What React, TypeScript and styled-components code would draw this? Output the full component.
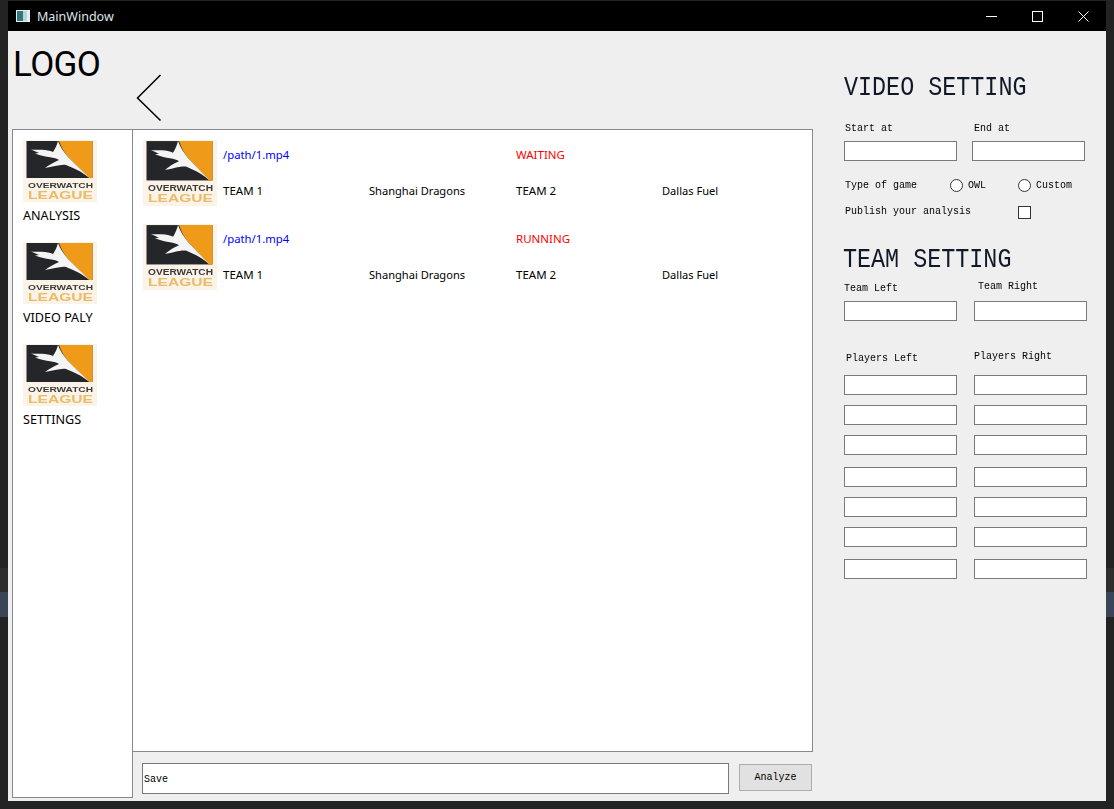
import React from "react";
import styled, { createGlobalStyle } from "styled-components";

const Global = createGlobalStyle`
  html, body { margin: 0; padding: 0; }
  body {
    height: 809px;
    overflow: hidden;
    background: linear-gradient(to bottom, #232323 0 568px, #2d2d2d 568px 592px, #3a4558 592px 617px, #232323 617px);
    font-family: "Noto Sans", sans-serif;
  }
`;

const mono = `"Liberation Mono", monospace`;

const Window = styled.div`
  width: 1098px;
  height: 800px;
  margin: 1px 0 0 8px;
  background: #efefef;
  display: flex;
  flex-direction: column;
`;

const TitleBar = styled.header`
  height: 30px;
  flex: none;
  background: #000;
  color: #dfe6ea;
  display: flex;
  align-items: center;
  padding-left: 8px;
  font-size: 12.5px;
`;

const TitleIcon = styled.svg`
  width: 14px;
  height: 12px;
  margin-right: 7px;
`;

const TitleText = styled.span`
  flex: 1;
`;

const WinButton = styled.div`
  width: 46px;
  height: 30px;
  display: flex;
  align-items: center;
  justify-content: center;
`;

const WinGlyph = styled.svg`
  width: 11px;
  height: 11px;
  stroke: #fff;
  fill: none;
`;

const Body = styled.div`
  flex: 1;
  display: flex;
  min-height: 0;
`;

const LeftColumn = styled.div`
  width: 805px;
  flex: none;
  display: flex;
  flex-direction: column;
`;

const Header = styled.div`
  height: 98px;
  flex: none;
  display: flex;
  padding-left: 5px;
`;

const LogoText = styled.div`
  width: 123px;
  flex: none;
  margin-top: 13px;
  font-family: Roboto, sans-serif;
  font-size: 35px;
  letter-spacing: -0.6px;
  line-height: 42px;
  color: #000;
`;

const BackArrow = styled.svg`
  width: 26px;
  height: 48px;
  margin-top: 43px;
`;

const Panels = styled.div`
  flex: 1;
  display: flex;
  padding-left: 4px;
`;

const Sidebar = styled.nav`
  width: 121px;
  height: 669px;
  flex: none;
  box-sizing: border-box;
  background: #fff;
  border: 1px solid #868a8e;
  padding: 10px 0 0 10px;
  display: flex;
  flex-direction: column;
  gap: 18px;
`;

const SideItem = styled.div`
  display: flex;
  flex-direction: column;
  gap: 6px;
`;

const SideLabel = styled.div`
  font-size: 12.6px;
  line-height: 16px;
  color: #000;
`;

const MainColumn = styled.div`
  flex: 1;
  display: flex;
  flex-direction: column;
  margin-left: -1px;
`;

const JobList = styled.section`
  height: 623px;
  flex: none;
  box-sizing: border-box;
  background: #fff;
  border: 1px solid #868a8e;
  padding: 10px 0 0 10px;
  display: flex;
  flex-direction: column;
  gap: 12px;
`;

const JobRow = styled.div`
  display: grid;
  grid-template-columns: 80px 146px 147px 146px 1fr;
  grid-template-rows: 30px 42px;
  align-items: center;
`;

const JobCell = styled.div<{ $color?: string; $size?: number }>`
  font-size: ${(p) => p.$size ?? 11.5}px;
  line-height: 16px;
  color: ${(p) => p.$color ?? "#000"};
  white-space: nowrap;
`;

const LogoSvg = styled.svg<{ $h: number; $span?: boolean }>`
  display: block;
  width: 74px;
  height: ${(p) => p.$h}px;
  filter: blur(0.45px);
  ${(p) => (p.$span ? "grid-row: 1 / 3; align-self: start;" : "")}
`;

const Footer = styled.div`
  display: flex;
  align-items: flex-start;
  gap: 10px;
  padding: 11px 0 0 10px;
`;

const SaveInput = styled.input`
  width: 587px;
  height: 31px;
  box-sizing: border-box;
  border: 1px solid #7a7a7a;
  background: #fff;
  padding: 2px 0 0 1px;
  margin: 0;
  outline: none;
  font-family: ${mono};
  font-size: 10px;
  color: #000;
`;

const AnalyzeButton = styled.button`
  width: 73px;
  height: 27px;
  margin: 1px 0 0;
  padding: 0;
  box-sizing: border-box;
  border: 1px solid #adadad;
  background: #e1e1e1;
  font-family: ${mono};
  font-size: 10px;
  color: #000;
`;

const Settings = styled.aside`
  flex: 1;
  padding-left: 31px;
  display: flex;
  flex-direction: column;
`;

const Heading = styled.h2<{ $top: number; $x?: number }>`
  margin: ${(p) => p.$top}px 0 0 ${(p) => p.$x ?? 0}px;
  font-family: ${mono};
  font-weight: 400;
  font-size: 23.4px;
  line-height: 30px;
  color: #10182a;
  white-space: nowrap;
  transform: scaleY(1.2);
`;

const TwoCols = styled.div<{ $top: number; $second?: number }>`
  margin-top: ${(p) => p.$top}px;
  display: grid;
  grid-template-columns: ${(p) => p.$second ?? 130}px 113px;
`;

const Label = styled.label<{ $x?: number; $dy?: number }>`
  display: block;
  padding-left: ${(p) => p.$x ?? 0}px;
  margin-top: ${(p) => p.$dy ?? 0}px;
  font-family: ${mono};
  font-size: 10px;
  line-height: 14px;
  color: #000;
  white-space: nowrap;
  transform: scaleY(1.15);
`;

const Field = styled.input`
  display: block;
  width: 113px;
  height: 20px;
  box-sizing: border-box;
  margin: 0;
  border: 1px solid #7a7a7a;
  background: #fff;
  outline: none;
`;

const OptionRow = styled.div<{ $top: number }>`
  margin-top: ${(p) => p.$top}px;
  height: 16px;
  display: flex;
  align-items: center;
  font-family: ${mono};
  font-size: 10px;
  color: #000;
`;

const OptionTitle = styled.span<{ $w: number }>`
  width: ${(p) => p.$w}px;
  padding-left: 1px;
  box-sizing: border-box;
  flex: none;
  white-space: nowrap;
  transform: scaleY(1.15);
`;

const Option = styled.label`
  width: 68px;
  flex: none;
  display: flex;
  align-items: center;
  gap: 5px;
`;

const OptionText = styled.span`
  transform: scaleY(1.15);
`;

const Radio = styled.span`
  width: 13px;
  height: 13px;
  box-sizing: border-box;
  border: 1px solid #333;
  border-radius: 50%;
  background: #fff;
  flex: none;
`;

const Check = styled.span`
  width: 13px;
  height: 13px;
  box-sizing: border-box;
  border: 1px solid #333;
  background: #fff;
  margin-top: 2px;
  flex: none;
`;

const PlayerGrid = styled.div`
  margin-top: 9px;
  display: flex;
  flex-direction: column;
`;

const Logo = ({ h, span }: { h: number; span?: boolean }) => (
  <LogoSvg $h={h} $span={span} viewBox="0 0 74 62" preserveAspectRatio="none">
    <rect width="74" height="62" fill="#fbf3e8" />
    <rect x="3.5" y="1" width="66" height="37" fill="#25262a" />
    <path d="M36 1 L69.5 1 L69.5 38 L66 38 L45 17 C41 12 38 7 36 1Z" fill="#f09a1a" />
    <path
      d="M35 1 C37 7 41 12 45 17 L66 37.5 C60 33 55 30 50 28 L43 25 C38 24 30 27 22 28 C26 25 31 22 36 20 C32 17 24 18 12 13.5 L16 13 L8 9.5 C14 10 24 9 30 12 C32 9 34 5 35 1Z"
      fill="#f4f4f4"
    />
    <text x="5" y="48" textLength="65" lengthAdjust="spacingAndGlyphs" fontFamily="Liberation Sans" fontWeight="700" fontSize="8" fill="#3a3a3a">
      OVERWATCH
    </text>
    <text x="5" y="58.5" textLength="65" lengthAdjust="spacingAndGlyphs" fontFamily="Liberation Sans" fontWeight="700" fontSize="10" fill="#e8bc68">
      LEAGUE
    </text>
  </LogoSvg>
);

const navItems = ["ANALYSIS", "VIDEO PALY", "SETTINGS"];
const jobs = ["WAITING", "RUNNING"];
const playerGaps = [0, 10, 10, 12, 10, 10, 12];

export default function App() {
  return (
    <>
      <Global />
      <Window>
        <TitleBar>
          <TitleIcon viewBox="0 0 14 12">
            <rect width="14" height="12" fill="#e8eef0" />
            <rect x="1" y="1" width="6" height="10" fill="#2f7a80" />
            <rect x="7" y="1" width="4" height="10" fill="#b9d3d6" />
          </TitleIcon>
          <TitleText>MainWindow</TitleText>
          <WinButton>
            <WinGlyph viewBox="0 0 11 11"><path d="M0 5.5H11" /></WinGlyph>
          </WinButton>
          <WinButton>
            <WinGlyph viewBox="0 0 11 11"><rect x="0.5" y="0.5" width="10" height="10" /></WinGlyph>
          </WinButton>
          <WinButton>
            <WinGlyph viewBox="0 0 11 11"><path d="M0.5 0.5L10.5 10.5M10.5 0.5L0.5 10.5" /></WinGlyph>
          </WinButton>
        </TitleBar>
        <Body>
          <LeftColumn>
            <Header>
              <LogoText>LOGO</LogoText>
              <BackArrow viewBox="0 0 26 48">
                <path d="M24.5 1L1.5 24L24.5 46.5" fill="none" stroke="#000" strokeWidth="1.5" />
              </BackArrow>
            </Header>
            <Panels>
              <Sidebar>
                {navItems.map((name) => (
                  <SideItem key={name}>
                    <Logo h={62} />
                    <SideLabel>{name}</SideLabel>
                  </SideItem>
                ))}
              </Sidebar>
              <MainColumn>
                <JobList>
                  {jobs.map((status) => (
                    <JobRow key={status}>
                      <Logo h={66} span />
                      <JobCell $color="#0000ff" $size={11.3}>/path/1.mp4</JobCell>
                      <JobCell />
                      <JobCell $color="#ff0000">{status}</JobCell>
                      <JobCell />
                      <JobCell>TEAM 1</JobCell>
                      <JobCell $size={11.1}>Shanghai Dragons</JobCell>
                      <JobCell>TEAM 2</JobCell>
                      <JobCell $size={11.1}>Dallas Fuel</JobCell>
                    </JobRow>
                  ))}
                </JobList>
                <Footer>
                  <SaveInput defaultValue="Save" />
                  <AnalyzeButton>Analyze</AnalyzeButton>
                </Footer>
              </MainColumn>
            </Panels>
          </LeftColumn>
          <Settings>
            <Heading $top={42}>VIDEO SETTING</Heading>
            <TwoCols $top={19} $second={128}>
              <Label $x={1}>Start at</Label>
              <Label $x={2}>End at</Label>
            </TwoCols>
            <TwoCols $top={5} $second={128}>
              <Field />
              <Field />
            </TwoCols>
            <OptionRow $top={16}>
              <OptionTitle $w={106}>Type of game</OptionTitle>
              <Option><Radio /><OptionText>OWL</OptionText></Option>
              <Option><Radio /><OptionText>Custom</OptionText></Option>
            </OptionRow>
            <OptionRow $top={10}>
              <OptionTitle $w={174}>Publish your analysis</OptionTitle>
              <Check />
            </OptionRow>
            <Heading $top={26} $x={-1}>TEAM SETTING</Heading>
            <TwoCols $top={5}>
              <Label $dy={2}>Team Left</Label>
              <Label $x={4}>Team Right</Label>
            </TwoCols>
            <TwoCols $top={5}>
              <Field />
              <Field />
            </TwoCols>
            <TwoCols $top={29}>
              <Label $x={2} $dy={2}>Players Left</Label>
              <Label>Players Right</Label>
            </TwoCols>
            <PlayerGrid>
              {playerGaps.map((gap, i) => (
                <TwoCols key={i} $top={gap}>
                  <Field />
                  <Field />
                </TwoCols>
              ))}
            </PlayerGrid>
          </Settings>
        </Body>
      </Window>
    </>
  );
}
